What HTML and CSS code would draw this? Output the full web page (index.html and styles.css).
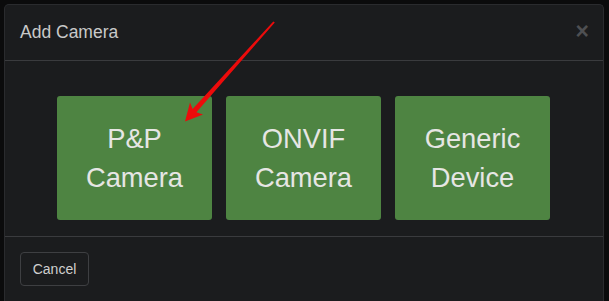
FILE: index.html
```html
<!DOCTYPE html>
<html>
<head>
<meta charset="utf-8">
<link rel="stylesheet" href="styles.css">
</head>
<body>
<div class="backdrop">
  <div class="modal">
    <div class="modal-header">
      <h4 class="modal-title">Add Camera</h4>
      <span class="close">&times;</span>
    </div>
    <div class="modal-body">
      <button class="choice">P&amp;P<br>Camera</button>
      <button class="choice">ONVIF<br>Camera</button>
      <button class="choice">Generic<br>Device</button>
    </div>
    <div class="modal-footer">
      <button class="cancel">Cancel</button>
    </div>
  </div>
</div>
<svg class="arrow" width="609" height="301" viewBox="0 0 609 301">
  <polygon points="274.8,22.5 196.4,112.3 203,114.4 185,121.6 190,102.4 192.6,108.9 273.3,21.5" fill="#ec0b0b"/>
</svg>
</body>
</html>
```

FILE: styles.css
```css
html, body {
  margin: 0;
  padding: 0;
}
body {
  background: #0b0b0c;
  width: 609px;
  height: 301px;
  overflow: hidden;
  font-family: "Liberation Sans", Arial, sans-serif;
  position: relative;
}
.backdrop {
  padding: 4px 5px 0 4px;
}
.modal {
  width: 598px;
  height: 296px;
  background: #1b1c1e;
  border: 1px solid #2a2b2e;
  border-bottom: none;
  border-radius: 5px 5px 0 0;
}
.modal-header {
  display: flex;
  align-items: center;
  justify-content: space-between;
  padding: 15px;
  border-bottom: 1px solid #3a3b3e;
}
.modal-title {
  margin: 0;
  font-size: 17.5px;
  line-height: 25px;
  font-weight: normal;
  color: #c9c9c9;
}
.close {
  font-size: 23px;
  font-weight: bold;
  line-height: 1;
  color: #4e4f52;
  margin-right: -1px;
  margin-top: -3px;
}
.modal-body {
  display: flex;
  gap: 14px;
  padding: 35px 0 16px 52px;
}
.choice {
  width: 155px;
  height: 124px;
  padding: 23px 0;
  border: none;
  border-radius: 3px;
  background: #4e8442;
  color: #e6e6e4;
  font-family: "Liberation Sans", Arial, sans-serif;
  font-size: 27.3px;
  line-height: 39px;
  text-align: center;
}
.modal-footer {
  border-top: 1px solid #3a3b3e;
  padding: 15px;
}
.cancel {
  height: 34px;
  width: 69px;
  padding: 0;
  background: transparent;
  border: 1px solid #3e3f42;
  border-radius: 4px;
  color: #cfcfcf;
  font-family: "Liberation Sans", Arial, sans-serif;
  font-size: 14px;
  line-height: 20px;
}
.arrow {
  position: absolute;
  left: 0;
  top: 0;
}
```
